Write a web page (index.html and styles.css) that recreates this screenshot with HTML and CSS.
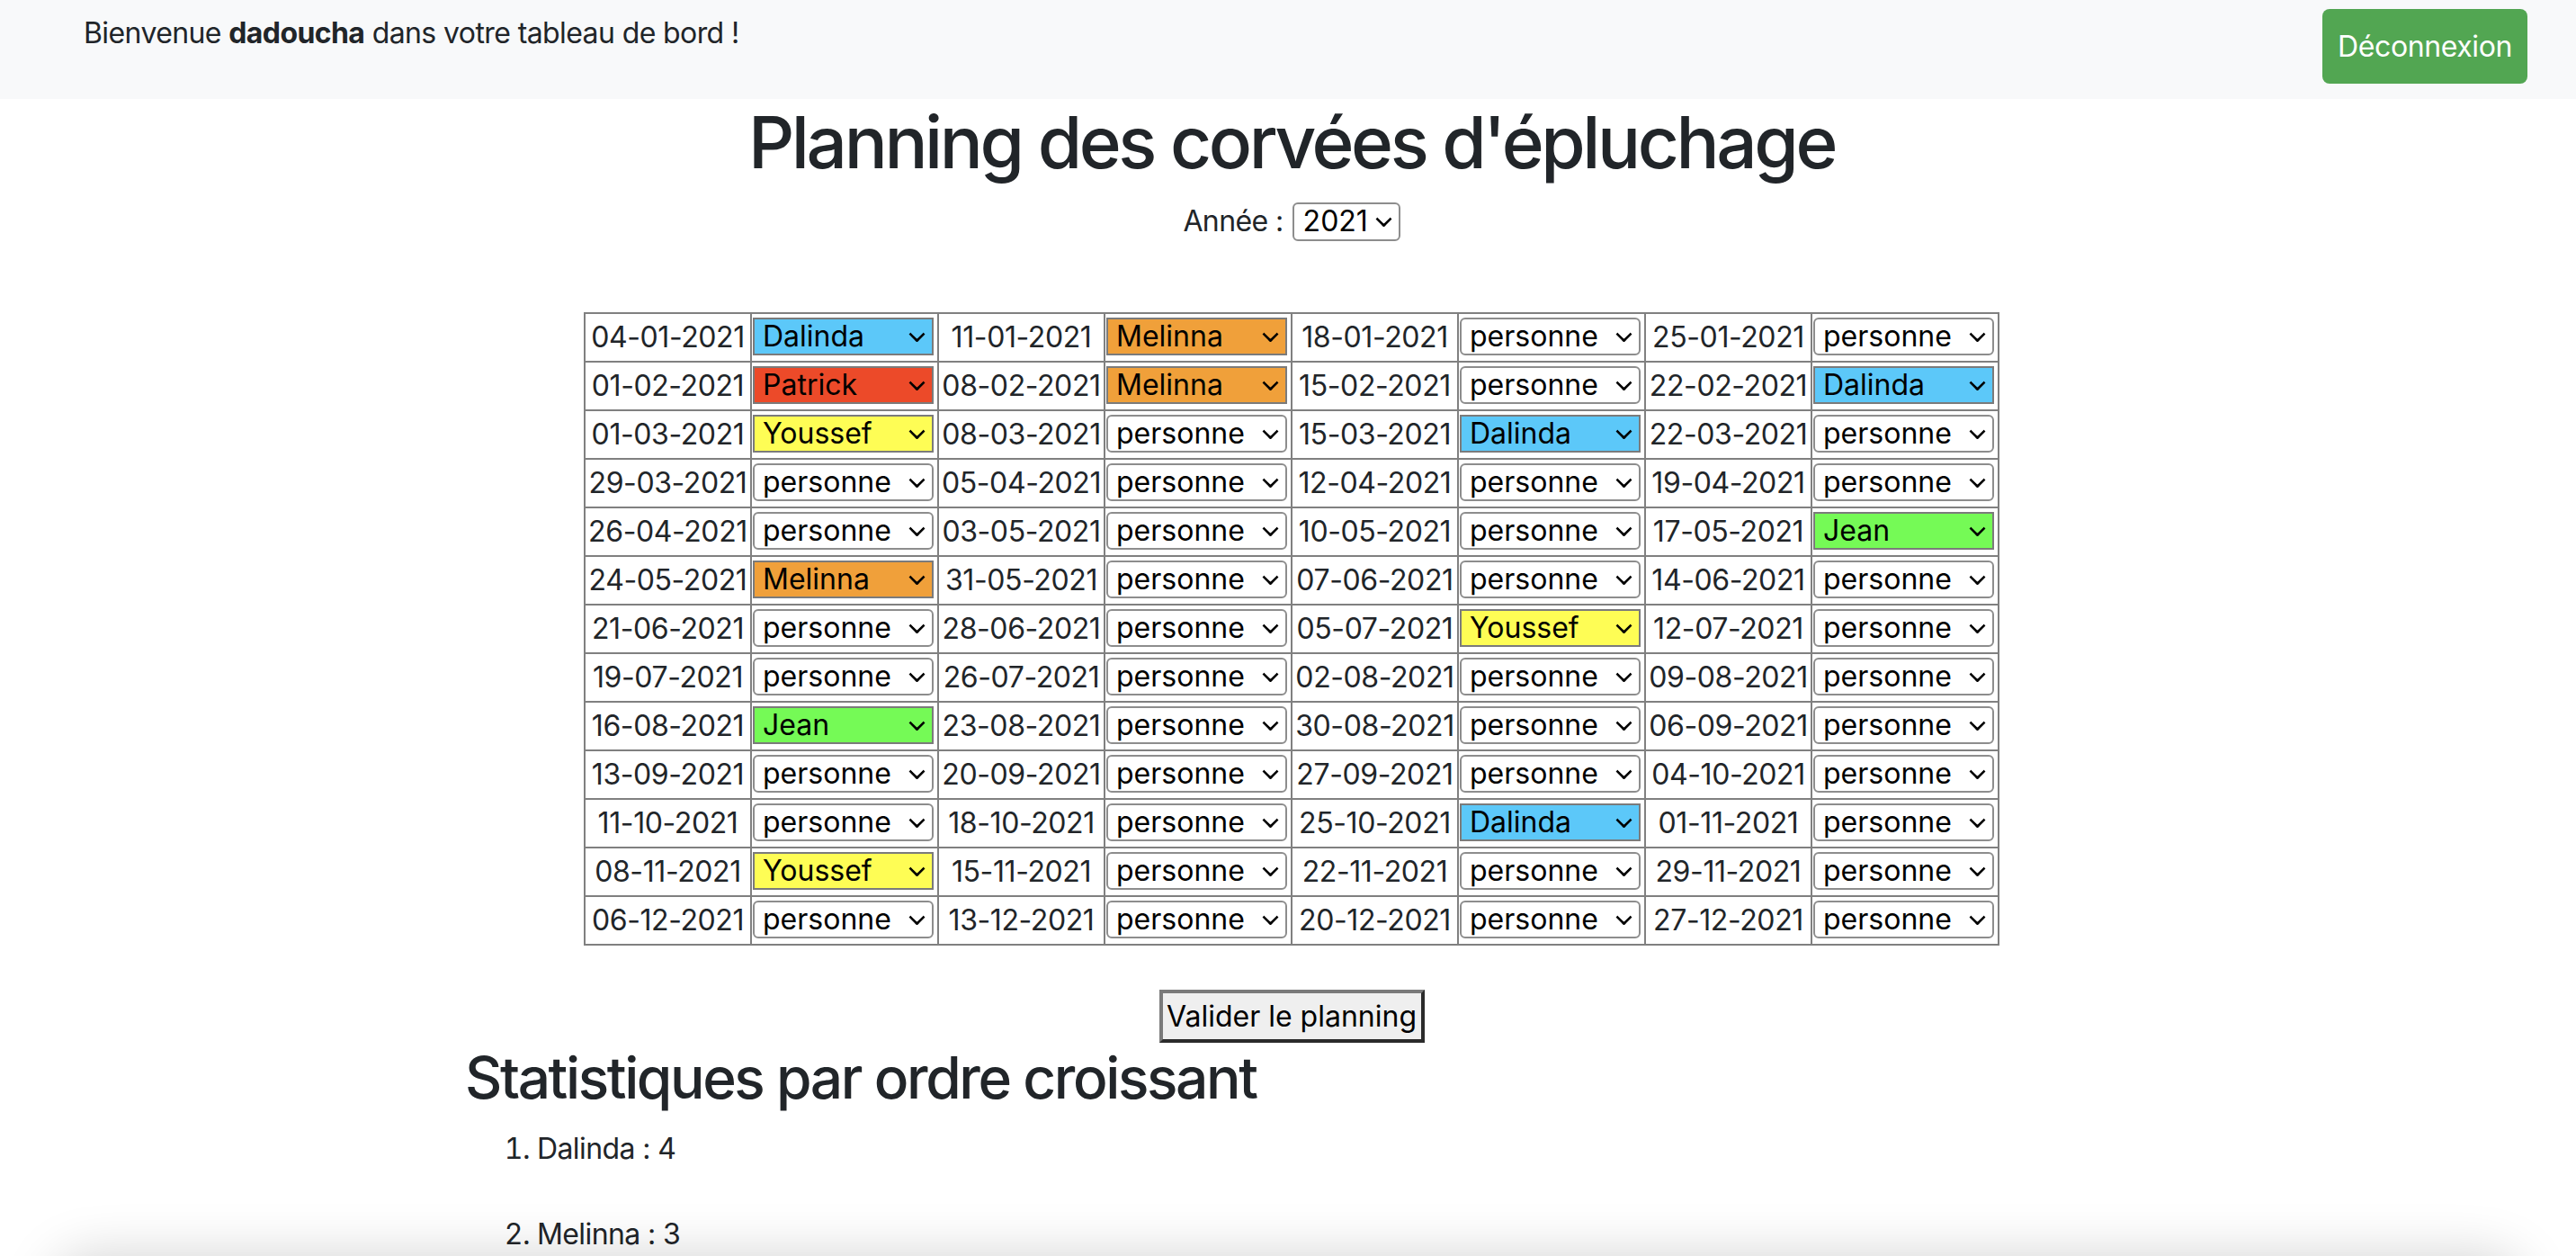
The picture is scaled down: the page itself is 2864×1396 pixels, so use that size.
FILE: index.html
```html
<!DOCTYPE html>
<html lang="fr">
<head>
<meta charset="utf-8">
<title>Planning des corvées d'épluchage</title>
<link rel="stylesheet" href="styles.css">
</head>
<body>
<header class="topbar">
  <p class="welcome">Bienvenue <b>dadoucha</b> dans votre tableau de bord !</p>
  <button class="logout" type="button">Déconnexion</button>
</header>
<main class="page">
  <h1 class="title">Planning des corvées d'épluchage</h1>
  <div class="year">
    <label class="year-label" for="annee">Année :</label>
    <span class="pick pick-year"><select id="annee"><option>2020</option><option selected>2021</option><option>2022</option></select></span>
  </div>
  <table class="planning">
    <colgroup><col class="cd"><col class="cs"><col class="cd"><col class="cs"><col class="cd"><col class="cs"><col class="cd"><col class="cs"></colgroup>
    <tbody>
      <tr>
        <td class="d">04-01-2021</td><td class="s"><span class="pick"><select class="p-dalinda"><option>personne</option><option selected>Dalinda</option><option>Melinna</option><option>Patrick</option><option>Youssef</option><option>Jean</option></select></span></td>
        <td class="d">11-01-2021</td><td class="s"><span class="pick"><select class="p-melinna"><option>personne</option><option>Dalinda</option><option selected>Melinna</option><option>Patrick</option><option>Youssef</option><option>Jean</option></select></span></td>
        <td class="d">18-01-2021</td><td class="s"><span class="pick"><select><option selected>personne</option><option>Dalinda</option><option>Melinna</option><option>Patrick</option><option>Youssef</option><option>Jean</option></select></span></td>
        <td class="d">25-01-2021</td><td class="s"><span class="pick"><select><option selected>personne</option><option>Dalinda</option><option>Melinna</option><option>Patrick</option><option>Youssef</option><option>Jean</option></select></span></td>
      </tr>
      <tr>
        <td class="d">01-02-2021</td><td class="s"><span class="pick"><select class="p-patrick"><option>personne</option><option>Dalinda</option><option>Melinna</option><option selected>Patrick</option><option>Youssef</option><option>Jean</option></select></span></td>
        <td class="d">08-02-2021</td><td class="s"><span class="pick"><select class="p-melinna"><option>personne</option><option>Dalinda</option><option selected>Melinna</option><option>Patrick</option><option>Youssef</option><option>Jean</option></select></span></td>
        <td class="d">15-02-2021</td><td class="s"><span class="pick"><select><option selected>personne</option><option>Dalinda</option><option>Melinna</option><option>Patrick</option><option>Youssef</option><option>Jean</option></select></span></td>
        <td class="d">22-02-2021</td><td class="s"><span class="pick"><select class="p-dalinda"><option>personne</option><option selected>Dalinda</option><option>Melinna</option><option>Patrick</option><option>Youssef</option><option>Jean</option></select></span></td>
      </tr>
      <tr>
        <td class="d">01-03-2021</td><td class="s"><span class="pick"><select class="p-youssef"><option>personne</option><option>Dalinda</option><option>Melinna</option><option>Patrick</option><option selected>Youssef</option><option>Jean</option></select></span></td>
        <td class="d">08-03-2021</td><td class="s"><span class="pick"><select><option selected>personne</option><option>Dalinda</option><option>Melinna</option><option>Patrick</option><option>Youssef</option><option>Jean</option></select></span></td>
        <td class="d">15-03-2021</td><td class="s"><span class="pick"><select class="p-dalinda"><option>personne</option><option selected>Dalinda</option><option>Melinna</option><option>Patrick</option><option>Youssef</option><option>Jean</option></select></span></td>
        <td class="d">22-03-2021</td><td class="s"><span class="pick"><select><option selected>personne</option><option>Dalinda</option><option>Melinna</option><option>Patrick</option><option>Youssef</option><option>Jean</option></select></span></td>
      </tr>
      <tr>
        <td class="d">29-03-2021</td><td class="s"><span class="pick"><select><option selected>personne</option><option>Dalinda</option><option>Melinna</option><option>Patrick</option><option>Youssef</option><option>Jean</option></select></span></td>
        <td class="d">05-04-2021</td><td class="s"><span class="pick"><select><option selected>personne</option><option>Dalinda</option><option>Melinna</option><option>Patrick</option><option>Youssef</option><option>Jean</option></select></span></td>
        <td class="d">12-04-2021</td><td class="s"><span class="pick"><select><option selected>personne</option><option>Dalinda</option><option>Melinna</option><option>Patrick</option><option>Youssef</option><option>Jean</option></select></span></td>
        <td class="d">19-04-2021</td><td class="s"><span class="pick"><select><option selected>personne</option><option>Dalinda</option><option>Melinna</option><option>Patrick</option><option>Youssef</option><option>Jean</option></select></span></td>
      </tr>
      <tr>
        <td class="d">26-04-2021</td><td class="s"><span class="pick"><select><option selected>personne</option><option>Dalinda</option><option>Melinna</option><option>Patrick</option><option>Youssef</option><option>Jean</option></select></span></td>
        <td class="d">03-05-2021</td><td class="s"><span class="pick"><select><option selected>personne</option><option>Dalinda</option><option>Melinna</option><option>Patrick</option><option>Youssef</option><option>Jean</option></select></span></td>
        <td class="d">10-05-2021</td><td class="s"><span class="pick"><select><option selected>personne</option><option>Dalinda</option><option>Melinna</option><option>Patrick</option><option>Youssef</option><option>Jean</option></select></span></td>
        <td class="d">17-05-2021</td><td class="s"><span class="pick"><select class="p-jean"><option>personne</option><option>Dalinda</option><option>Melinna</option><option>Patrick</option><option>Youssef</option><option selected>Jean</option></select></span></td>
      </tr>
      <tr>
        <td class="d">24-05-2021</td><td class="s"><span class="pick"><select class="p-melinna"><option>personne</option><option>Dalinda</option><option selected>Melinna</option><option>Patrick</option><option>Youssef</option><option>Jean</option></select></span></td>
        <td class="d">31-05-2021</td><td class="s"><span class="pick"><select><option selected>personne</option><option>Dalinda</option><option>Melinna</option><option>Patrick</option><option>Youssef</option><option>Jean</option></select></span></td>
        <td class="d">07-06-2021</td><td class="s"><span class="pick"><select><option selected>personne</option><option>Dalinda</option><option>Melinna</option><option>Patrick</option><option>Youssef</option><option>Jean</option></select></span></td>
        <td class="d">14-06-2021</td><td class="s"><span class="pick"><select><option selected>personne</option><option>Dalinda</option><option>Melinna</option><option>Patrick</option><option>Youssef</option><option>Jean</option></select></span></td>
      </tr>
      <tr>
        <td class="d">21-06-2021</td><td class="s"><span class="pick"><select><option selected>personne</option><option>Dalinda</option><option>Melinna</option><option>Patrick</option><option>Youssef</option><option>Jean</option></select></span></td>
        <td class="d">28-06-2021</td><td class="s"><span class="pick"><select><option selected>personne</option><option>Dalinda</option><option>Melinna</option><option>Patrick</option><option>Youssef</option><option>Jean</option></select></span></td>
        <td class="d">05-07-2021</td><td class="s"><span class="pick"><select class="p-youssef"><option>personne</option><option>Dalinda</option><option>Melinna</option><option>Patrick</option><option selected>Youssef</option><option>Jean</option></select></span></td>
        <td class="d">12-07-2021</td><td class="s"><span class="pick"><select><option selected>personne</option><option>Dalinda</option><option>Melinna</option><option>Patrick</option><option>Youssef</option><option>Jean</option></select></span></td>
      </tr>
      <tr>
        <td class="d">19-07-2021</td><td class="s"><span class="pick"><select><option selected>personne</option><option>Dalinda</option><option>Melinna</option><option>Patrick</option><option>Youssef</option><option>Jean</option></select></span></td>
        <td class="d">26-07-2021</td><td class="s"><span class="pick"><select><option selected>personne</option><option>Dalinda</option><option>Melinna</option><option>Patrick</option><option>Youssef</option><option>Jean</option></select></span></td>
        <td class="d">02-08-2021</td><td class="s"><span class="pick"><select><option selected>personne</option><option>Dalinda</option><option>Melinna</option><option>Patrick</option><option>Youssef</option><option>Jean</option></select></span></td>
        <td class="d">09-08-2021</td><td class="s"><span class="pick"><select><option selected>personne</option><option>Dalinda</option><option>Melinna</option><option>Patrick</option><option>Youssef</option><option>Jean</option></select></span></td>
      </tr>
      <tr>
        <td class="d">16-08-2021</td><td class="s"><span class="pick"><select class="p-jean"><option>personne</option><option>Dalinda</option><option>Melinna</option><option>Patrick</option><option>Youssef</option><option selected>Jean</option></select></span></td>
        <td class="d">23-08-2021</td><td class="s"><span class="pick"><select><option selected>personne</option><option>Dalinda</option><option>Melinna</option><option>Patrick</option><option>Youssef</option><option>Jean</option></select></span></td>
        <td class="d">30-08-2021</td><td class="s"><span class="pick"><select><option selected>personne</option><option>Dalinda</option><option>Melinna</option><option>Patrick</option><option>Youssef</option><option>Jean</option></select></span></td>
        <td class="d">06-09-2021</td><td class="s"><span class="pick"><select><option selected>personne</option><option>Dalinda</option><option>Melinna</option><option>Patrick</option><option>Youssef</option><option>Jean</option></select></span></td>
      </tr>
      <tr>
        <td class="d">13-09-2021</td><td class="s"><span class="pick"><select><option selected>personne</option><option>Dalinda</option><option>Melinna</option><option>Patrick</option><option>Youssef</option><option>Jean</option></select></span></td>
        <td class="d">20-09-2021</td><td class="s"><span class="pick"><select><option selected>personne</option><option>Dalinda</option><option>Melinna</option><option>Patrick</option><option>Youssef</option><option>Jean</option></select></span></td>
        <td class="d">27-09-2021</td><td class="s"><span class="pick"><select><option selected>personne</option><option>Dalinda</option><option>Melinna</option><option>Patrick</option><option>Youssef</option><option>Jean</option></select></span></td>
        <td class="d">04-10-2021</td><td class="s"><span class="pick"><select><option selected>personne</option><option>Dalinda</option><option>Melinna</option><option>Patrick</option><option>Youssef</option><option>Jean</option></select></span></td>
      </tr>
      <tr>
        <td class="d">11-10-2021</td><td class="s"><span class="pick"><select><option selected>personne</option><option>Dalinda</option><option>Melinna</option><option>Patrick</option><option>Youssef</option><option>Jean</option></select></span></td>
        <td class="d">18-10-2021</td><td class="s"><span class="pick"><select><option selected>personne</option><option>Dalinda</option><option>Melinna</option><option>Patrick</option><option>Youssef</option><option>Jean</option></select></span></td>
        <td class="d">25-10-2021</td><td class="s"><span class="pick"><select class="p-dalinda"><option>personne</option><option selected>Dalinda</option><option>Melinna</option><option>Patrick</option><option>Youssef</option><option>Jean</option></select></span></td>
        <td class="d">01-11-2021</td><td class="s"><span class="pick"><select><option selected>personne</option><option>Dalinda</option><option>Melinna</option><option>Patrick</option><option>Youssef</option><option>Jean</option></select></span></td>
      </tr>
      <tr>
        <td class="d">08-11-2021</td><td class="s"><span class="pick"><select class="p-youssef"><option>personne</option><option>Dalinda</option><option>Melinna</option><option>Patrick</option><option selected>Youssef</option><option>Jean</option></select></span></td>
        <td class="d">15-11-2021</td><td class="s"><span class="pick"><select><option selected>personne</option><option>Dalinda</option><option>Melinna</option><option>Patrick</option><option>Youssef</option><option>Jean</option></select></span></td>
        <td class="d">22-11-2021</td><td class="s"><span class="pick"><select><option selected>personne</option><option>Dalinda</option><option>Melinna</option><option>Patrick</option><option>Youssef</option><option>Jean</option></select></span></td>
        <td class="d">29-11-2021</td><td class="s"><span class="pick"><select><option selected>personne</option><option>Dalinda</option><option>Melinna</option><option>Patrick</option><option>Youssef</option><option>Jean</option></select></span></td>
      </tr>
      <tr>
        <td class="d">06-12-2021</td><td class="s"><span class="pick"><select><option selected>personne</option><option>Dalinda</option><option>Melinna</option><option>Patrick</option><option>Youssef</option><option>Jean</option></select></span></td>
        <td class="d">13-12-2021</td><td class="s"><span class="pick"><select><option selected>personne</option><option>Dalinda</option><option>Melinna</option><option>Patrick</option><option>Youssef</option><option>Jean</option></select></span></td>
        <td class="d">20-12-2021</td><td class="s"><span class="pick"><select><option selected>personne</option><option>Dalinda</option><option>Melinna</option><option>Patrick</option><option>Youssef</option><option>Jean</option></select></span></td>
        <td class="d">27-12-2021</td><td class="s"><span class="pick"><select><option selected>personne</option><option>Dalinda</option><option>Melinna</option><option>Patrick</option><option>Youssef</option><option>Jean</option></select></span></td>
      </tr>
    </tbody>
  </table>
  <div class="actions"><button class="validate" type="button">Valider le planning</button></div>
  <section class="stats">
    <h2 class="stats-title">Statistiques par ordre croissant</h2>
    <ol class="stats-list">
      <li>Dalinda : 4</li>
      <li>Melinna : 3</li>
      <li>Youssef : 3</li>
      <li>Jean : 2</li>
      <li>Patrick : 1</li>
    </ol>
  </section>
</main>
<div class="footer-shadow"></div>
</body>
</html>
```
FILE: styles.css
```css
* { box-sizing: border-box; }
html, body { margin: 0; padding: 0; }
body {
  font-family: Inter, "Noto Sans", sans-serif;
  font-size: 32px;
  line-height: 48px;
  letter-spacing: -0.6px;
  color: #212529;
  background: #fff;
}

/* top bar */
.topbar {
  display: flex;
  justify-content: space-between;
  align-items: flex-start;
  height: 110px;
  padding: 10px 54px 0 93px;
  background: #f8f9fa;
}
.welcome { margin: 3px 0 0; }
.welcome b { font-weight: 700; }
.logout {
  width: 228px;
  height: 83px;
  padding: 0;
  border: 0;
  border-radius: 8px;
  background: #52a652;
  color: #fff;
  font: inherit;
  line-height: 48px;
  letter-spacing: -0.4px;
}

/* main */
.page { padding-left: 8px; }
.title {
  margin: 0 0 16px;
  font-size: 80px;
  line-height: 96px;
  font-weight: 500;
  letter-spacing: -3.4px;
  text-align: center;
}
.year {
  display: flex;
  justify-content: center;
  align-items: center;
  height: 48px;
}
.year-label { margin-right: 10px; }

/* select */
.pick {
  position: relative;
  display: block;
  width: 201px;
  height: 42px;
}
.pick::after {
  content: "";
  position: absolute;
  right: 12px;
  top: 50%;
  width: 10px;
  height: 10px;
  margin-top: -9px;
  border-right: 3px solid #000;
  border-bottom: 3px solid #000;
  border-radius: 0 0 2px 0;
  transform: rotate(45deg);
  pointer-events: none;
}
.pick select {
  -webkit-appearance: none;
  appearance: none;
  display: block;
  width: 100%;
  height: 100%;
  margin: 0;
  padding: 0 32px 0 9px;
  font: inherit;
  line-height: 38px;
  color: #000;
  background: #fff;
  border: 2px solid #8d8d8d;
  border-radius: 6px;
}
.pick-year { width: 120px; height: 43px; }
.pick-year select { padding-left: 10px; }

.pick select.p-dalinda,
.pick select.p-melinna,
.pick select.p-patrick,
.pick select.p-youssef,
.pick select.p-jean {
  border-radius: 0;
  border-color: #7b7b7b;
}
.pick select.p-dalinda { background: #5cc8f9; }
.pick select.p-melinna { background: #f0a03a; }
.pick select.p-patrick { background: #ec4a29; }
.pick select.p-youssef { background: #fefd55; }
.pick select.p-jean { background: #75fa56; }

/* table */
.planning {
  width: 1572px;
  margin: 77px auto 0;
  border-collapse: collapse;
  table-layout: fixed;
  border: 2px solid #808080;
}
.planning col.cd { width: 185px; }
.planning col.cs { width: 208px; }
.planning td {
  border: 2px solid #808080;
  vertical-align: middle;
}
.planning td.d {
  padding: 0 2px;
  text-align: center;
  white-space: nowrap;
  letter-spacing: -0.4px;
}
.planning td.s {
  padding: 4px 2px 6px 1px;
}

/* validate */
.actions {
  margin-top: 49px;
  text-align: center;
}
.validate {
  width: 295px;
  height: 59px;
  padding: 0;
  font: inherit;
  line-height: 48px;
  color: #000;
  background: #efefef;
  border: 4px solid;
  border-color: #7a7a7a #2b2b2b #2b2b2b #7a7a7a;
  border-radius: 0;
}

/* stats */
.stats { padding-left: 509px; }
.stats-title {
  margin: 0 0 17px;
  font-size: 64px;
  line-height: 77px;
  font-weight: 500;
  letter-spacing: -2.4px;
}
.stats-list {
  margin: 0;
  padding-left: 80px;
}
.stats-list li { margin-bottom: 47px; }

/* shadow of the fixed footer sitting just below the viewport */
.footer-shadow {
  position: fixed;
  left: 60px;
  right: 60px;
  top: 100%;
  height: 120px;
  border-radius: 40px;
  background: #fff;
  box-shadow: 0 0 60px rgba(0, 0, 0, 0.18);
  pointer-events: none;
}
```
